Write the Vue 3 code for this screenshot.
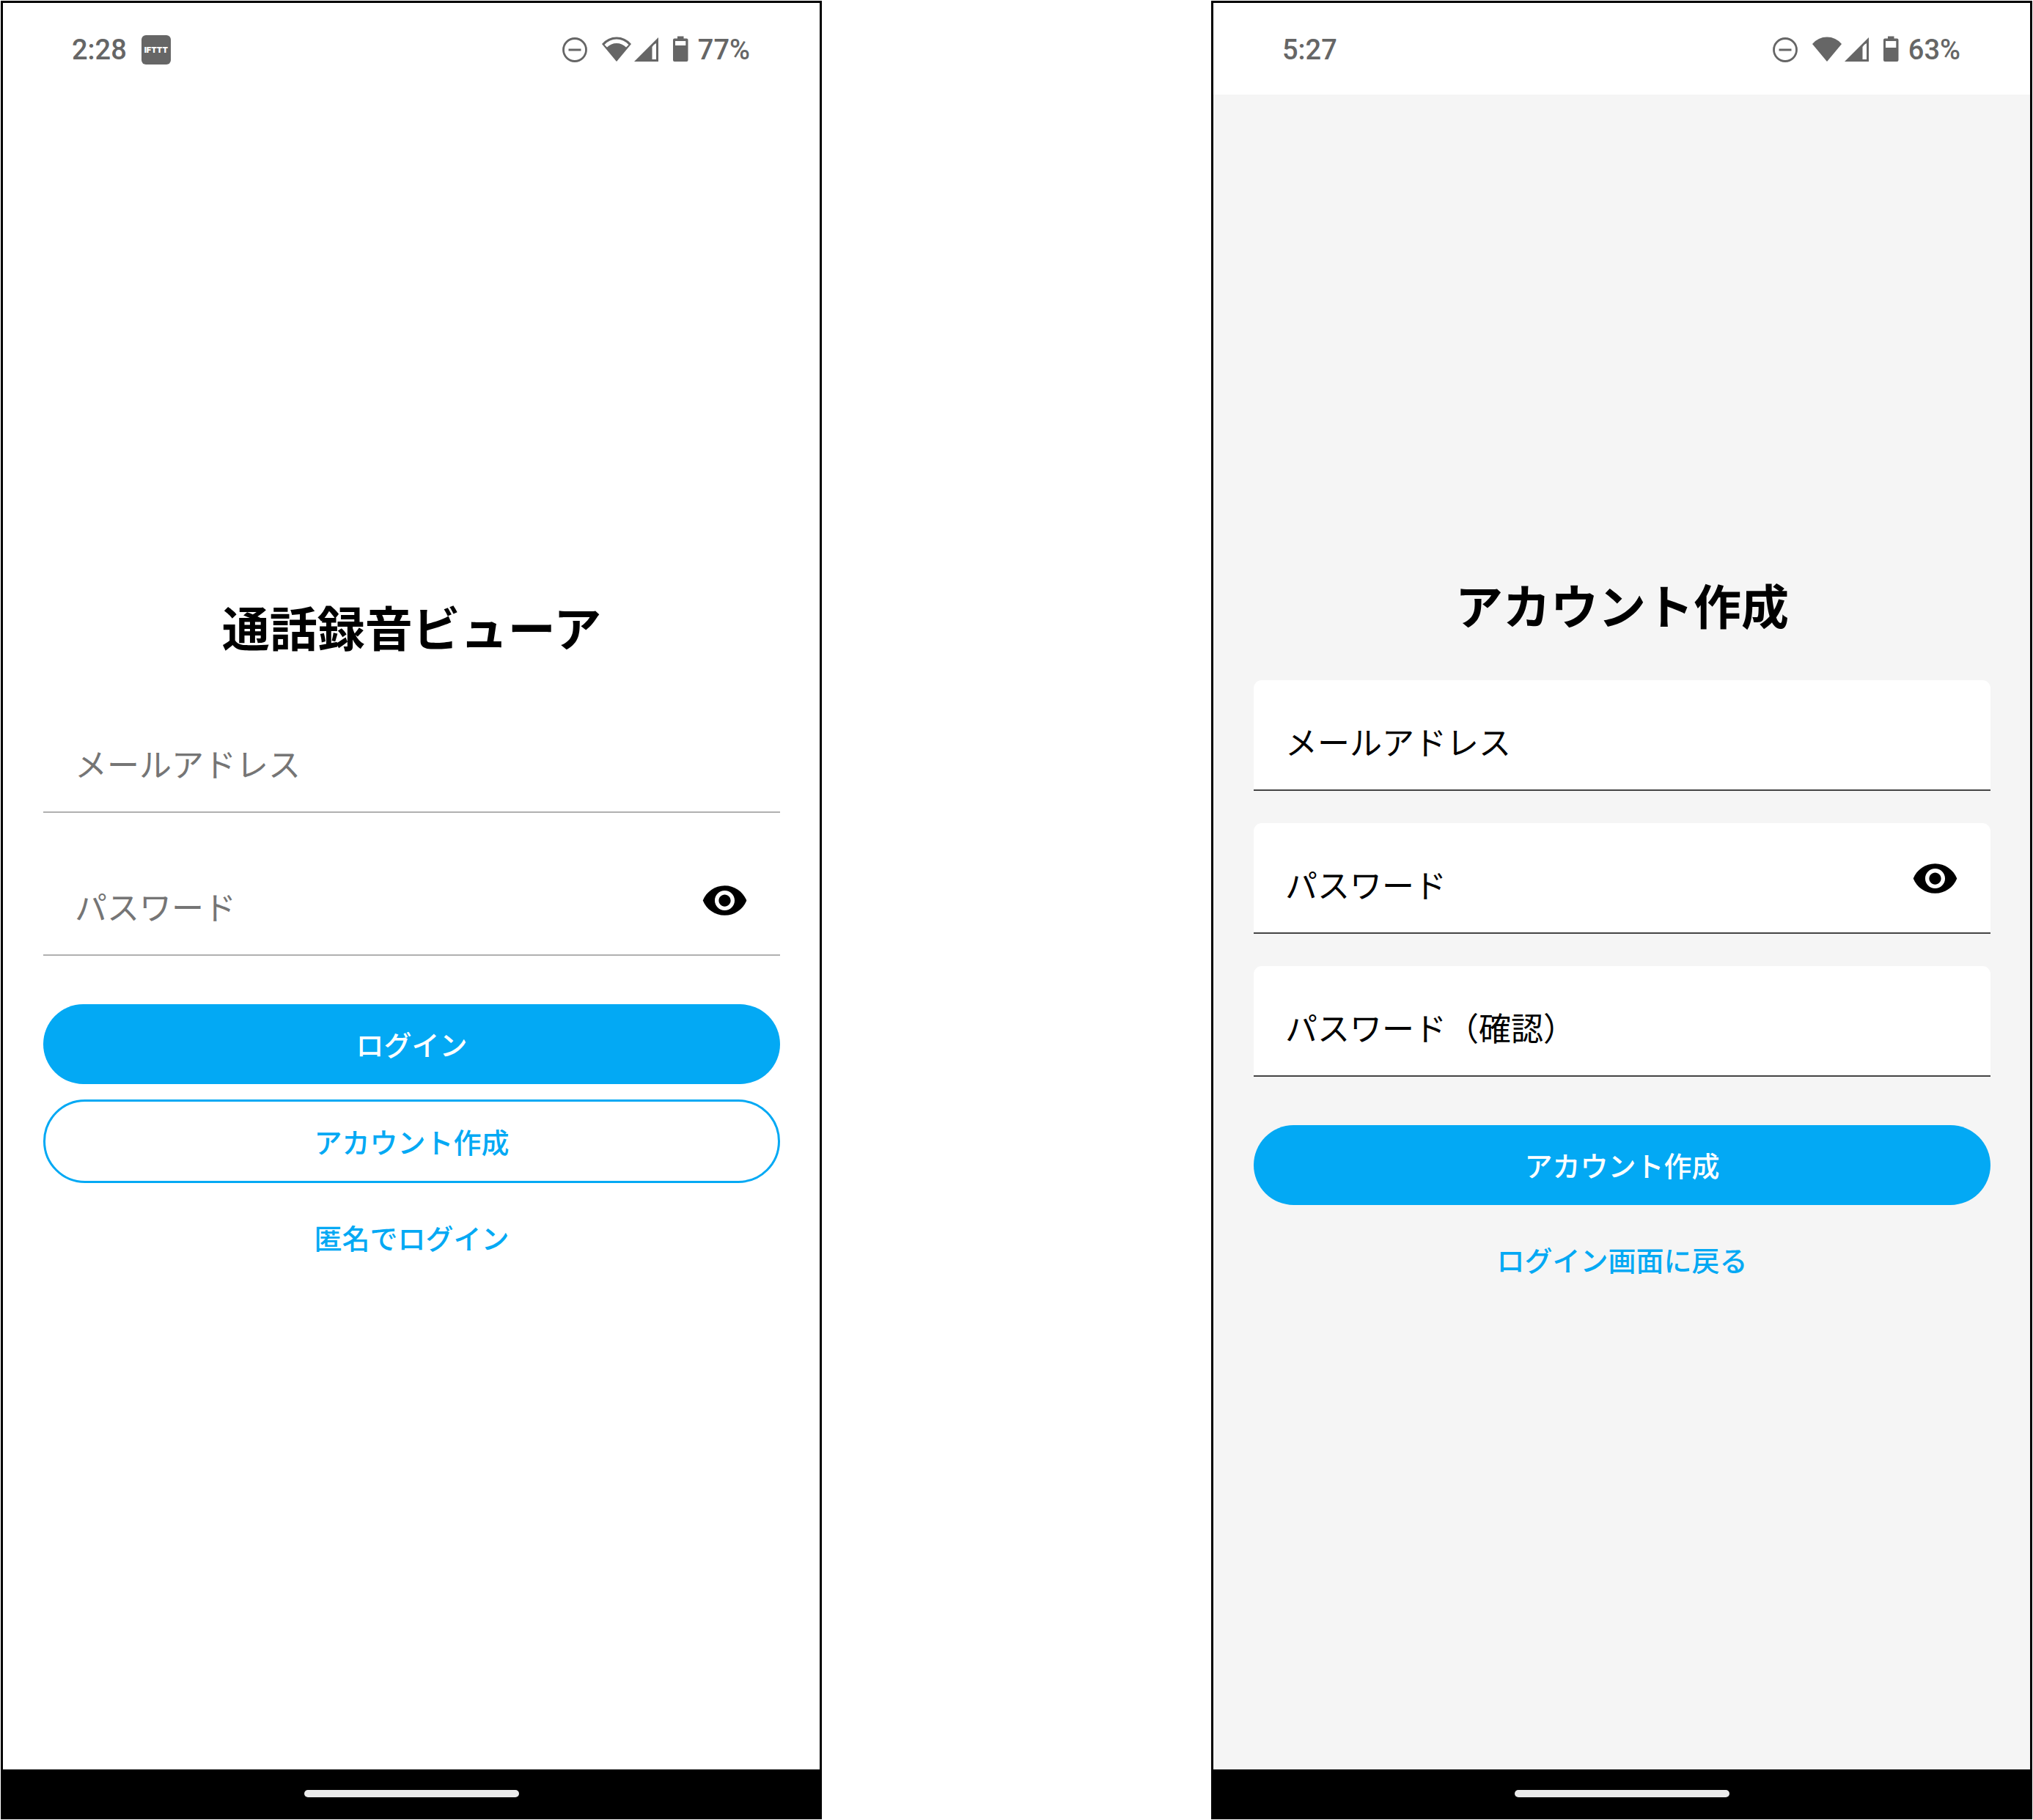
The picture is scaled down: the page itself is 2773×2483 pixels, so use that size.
<script setup>
import { ref } from 'vue'

const screens = [
  {
    id: 'login',
    time: '2:28',
    ifttt: true,
    wifiFull: false,
    battery: '77%',
    title: '通話録音ビューア',
    fields: [
      { name: 'email', label: 'メールアドレス', type: 'email' },
      { name: 'password', label: 'パスワード', type: 'password', toggle: true },
    ],
    actions: [
      { label: 'ログイン', kind: 'filled' },
      { label: 'アカウント作成', kind: 'outlined' },
      { label: '匿名でログイン', kind: 'plain' },
    ],
  },
  {
    id: 'signup',
    time: '5:27',
    ifttt: false,
    wifiFull: true,
    battery: '63%',
    title: 'アカウント作成',
    fields: [
      { name: 'email', label: 'メールアドレス', type: 'email' },
      { name: 'password', label: 'パスワード', type: 'password', toggle: true },
      { name: 'confirm', label: 'パスワード（確認）', type: 'password' },
    ],
    actions: [
      { label: 'アカウント作成', kind: 'filled' },
      { label: 'ログイン画面に戻る', kind: 'plain' },
    ],
  },
]

const revealed = ref({})
const toggle = (id) => {
  revealed.value[id] = !revealed.value[id]
}
const inputType = (screen, field) =>
  field.type === 'password' && revealed.value[screen.id] ? 'text' : field.type
</script>

<template>
  <div class="board">
    <section v-for="s in screens" :key="s.id" class="phone" :class="s.id">
      <header class="status">
        <span class="clock">{{ s.time }}</span>
        <span v-if="s.ifttt" class="badge">IFTTT</span>
        <svg class="indicators" viewBox="0 0 174 40" aria-hidden="true">
          <circle cx="18" cy="20" r="15.5" fill="none" stroke="#666" stroke-width="2.8" />
          <path d="M9.5 20H26.5" stroke="#666" stroke-width="3" />
          <path d="M75 36L55 12A26 26 0 0 1 95 12Z" fill="#666" />
          <path
            v-if="!s.wifiFull"
            d="M58.5 13A22 22 0 0 1 91.5 13L88 16.5A18 18 0 0 0 62 16.5Z"
            fill="#fff"
          />
          <path d="M99 36H132V3Z" fill="#666" />
          <path d="M123.5 16Q125.5 12.5 129 11V33H123.5Z" fill="#fff" />
          <path
            d="M158 1.5H166.500V4.500H170.500Q172.500 4.500 172.500 6.500V34Q172.500 36 170.500 36H154Q152 36 152 34V6.500Q152 4.500 154 4.500H158Z"
            fill="#666"
          />
          <rect x="155" y="8" width="14.300" :height="s.wifiFull ? 9 : 6" fill="#fff" />
        </svg>
        <span class="percent">{{ s.battery }}</span>
      </header>

      <main class="content">
        <h1>{{ s.title }}</h1>
        <form class="form" @submit.prevent>
          <div class="fields">
            <div v-for="f in s.fields" :key="f.name" class="field">
              <input
                :type="inputType(s, f)"
                :name="f.name"
                :placeholder="f.label"
                :aria-label="f.label"
              />
              <button
                v-if="f.toggle"
                type="button"
                class="eye"
                aria-label="パスワードを表示"
                @click="toggle(s.id)"
              >
                <svg viewBox="0 0 24 24" aria-hidden="true">
                  <path
                    d="M12 4.500C7 4.500 2.730 7.610 1 12c1.730 4.390 6 7.500 11 7.500s9.270-3.110 11-7.500c-1.730-4.390-6-7.500-11-7.500zM12 17c-2.760 0-5-2.240-5-5s2.240-5 5-5 5 2.240 5 5-2.240 5-5 5zm0-8c-1.660 0-3 1.340-3 3s1.340 3 3 3 3-1.340 3-3-1.340-3-3-3z"
                  />
                </svg>
              </button>
            </div>
          </div>
          <div class="actions">
            <button
              v-for="a in s.actions"
              :key="a.label"
              type="button"
              class="action"
              :class="a.kind"
            >
              {{ a.label }}
            </button>
          </div>
        </form>
      </main>

      <footer class="navbar"><span class="handle"></span></footer>
    </section>
  </div>
</template>

<style>
body {
  background: #fff;
}
</style>

<style scoped>
.board {
  display: grid;
  grid-template-columns: 1120fr 1120fr;
  column-gap: 531px;
  min-height: 100vh;
  padding: 1px;
  box-sizing: border-box;
  font-family: "Noto Sans CJK JP", sans-serif;
}

.phone {
  display: flex;
  flex-direction: column;
  box-sizing: border-box;
  border: 3px solid #000;
  background: #fff;
}

.status {
  display: flex;
  align-items: center;
  height: 125px;
  box-sizing: border-box;
  padding: 2px 95px 0 94px;
  background: #fff;
  color: #666;
  font-family: Roboto, sans-serif;
  font-size: 38px;
  font-weight: 500;
  line-height: 44px;
}

.badge {
  display: flex;
  align-items: center;
  justify-content: center;
  width: 40px;
  height: 40px;
  margin-left: 20px;
  border-radius: 6px;
  background: #666;
  color: #fff;
  font-family: Inter, sans-serif;
  font-size: 11px;
  font-weight: 900;
  line-height: 12px;
}

.indicators {
  width: 174px;
  height: 40px;
  margin-left: auto;
  margin-right: 12px;
}

.content {
  display: flex;
  flex: 1;
  flex-direction: column;
  justify-content: center;
  padding: 0 54px 0 55px;
}

.signup .content {
  background: #f5f5f5;
}

h1 {
  margin: 0 0 50px;
  color: #000;
  font-size: 65px;
  font-weight: 700;
  line-height: 107px;
  text-align: center;
}

.fields {
  display: flex;
  flex-direction: column;
  gap: 44px;
}

.field {
  display: flex;
  align-items: center;
  height: 151px;
  box-sizing: border-box;
  padding: 0 43px;
  border-bottom: 2px solid #b0b0b0;
  border-radius: 11px 11px 0 0;
  background: #fff;
}

.signup .field {
  border-bottom-color: #444;
}

input {
  flex: 1;
  min-width: 0;
  height: 100%;
  box-sizing: border-box;
  padding: 18px 0 0;
  border: 0;
  outline: 0;
  background: none;
  color: #000;
  font-family: inherit;
  font-size: 44px;
  line-height: 64px;
}

input::placeholder {
  color: #757575;
  opacity: 1;
}

.signup input::placeholder {
  color: #000;
}

.eye {
  width: 65px;
  height: 65px;
  margin-top: 2px;
  padding: 0;
  border: 0;
  background: none;
}

.eye svg {
  display: block;
  width: 65px;
  height: 65px;
}

.actions {
  display: flex;
  flex-direction: column;
  gap: 21px;
  margin-top: 66px;
}

.action {
  height: 109px;
  padding: 0;
  border: 0;
  border-radius: 57px;
  background: none;
  color: #03a9f4;
  font-family: inherit;
  font-size: 38px;
  font-weight: 500;
  line-height: 56px;
}

.filled {
  background: #03a9f4;
  color: #fff;
}

.outlined {
  height: 114px;
  border: 3px solid #03a9f4;
}

.plain {
  height: 108px;
  padding-bottom: 2px;
}

.navbar {
  display: flex;
  align-items: center;
  justify-content: center;
  height: 65px;
  background: #000;
}

.handle {
  width: 293px;
  height: 10px;
  border-radius: 5px;
  background: #ebebeb;
}
</style>
